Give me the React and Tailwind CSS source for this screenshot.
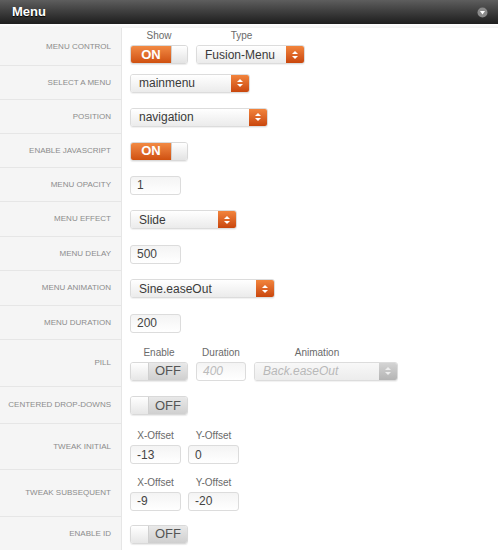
import React from "react";

const font = { fontFamily: '"Liberation Sans", Arial, sans-serif' };

function Toggle({ on }) {
  if (on) {
    return (
      <div className="flex h-[19px] w-[58px] overflow-hidden rounded-[3px] border border-[#d9d9d9] shadow-[0_1px_1px_rgba(0,0,0,0.08)]">
        <div className="flex w-[40px] items-center justify-center bg-gradient-to-b from-[#f28a43] to-[#cf500e] text-[13px] font-bold text-white">
          ON
        </div>
        <div className="flex-1 border-l border-[#d0d0d0] bg-gradient-to-b from-[#ffffff] to-[#e3e3e3]" />
      </div>
    );
  }
  return (
    <div className="flex h-[19px] w-[58px] overflow-hidden rounded-[3px] border border-[#d9d9d9] shadow-[0_1px_1px_rgba(0,0,0,0.08)]">
      <div className="w-[18px] border-r border-[#d0d0d0] bg-gradient-to-b from-[#ffffff] to-[#e6e6e6]" />
      <div className="flex flex-1 items-center justify-center bg-gradient-to-b from-[#e9e9e9] to-[#cfcfcf] text-[13px] text-[#555]">
        OFF
      </div>
    </div>
  );
}

function Arrows({ disabled }) {
  return (
    <div
      className={
        "flex w-[18px] flex-col items-center justify-center gap-[2px] " +
        (disabled
          ? "bg-gradient-to-b from-[#d4d4d4] to-[#b4b4b4]"
          : "bg-gradient-to-b from-[#f2843c] to-[#c9460b]")
      }
    >
      <svg width="6" height="3" viewBox="0 0 6 3">
        <path d="M0 3 L3 0 L6 3 Z" fill={disabled ? "#eeeeee" : "#ffffff"} />
      </svg>
      <svg width="6" height="3" viewBox="0 0 6 3">
        <path d="M0 0 L3 3 L6 0 Z" fill={disabled ? "#eeeeee" : "#ffffff"} />
      </svg>
    </div>
  );
}

function Select({ value, width, disabled }) {
  return (
    <div
      className={
        "flex h-[19px] overflow-hidden rounded-[3px] border border-[#dcdcdc] shadow-[0_1px_1px_rgba(0,0,0,0.06)] " +
        width
      }
    >
      <div
        className={
          "flex flex-1 items-center pl-[8px] text-[12px] " +
          (disabled
            ? "bg-gradient-to-b from-[#f8f8f8] to-[#ececec] italic text-[#b8b8b8]"
            : "bg-gradient-to-b from-[#ffffff] to-[#ebebeb] text-[#3a3a3a]")
        }
      >
        {value}
      </div>
      <Arrows disabled={disabled} />
    </div>
  );
}

function Input({ value, disabled, width = "w-[51px]" }) {
  return (
    <div
      className={
        "flex h-[19px] items-center rounded-[3px] border border-[#dcdcdc] bg-gradient-to-b from-[#f4f4f4] to-[#ffffff] pl-[6px] text-[12px] " +
        width +
        (disabled ? " italic text-[#bbbbbb]" : " text-[#444]")
      }
    >
      {value}
    </div>
  );
}

function Labeled({ label, children, arrow }) {
  return (
    <div className="flex flex-col">
      <div className={"mb-[3px] text-center text-[10px] leading-[12px] text-[#6a6a6a] " + (arrow ? "pr-[18px]" : "")}>
        {label}
      </div>
      {children}
    </div>
  );
}

function Row({ label, height, children }) {
  return (
    <div className={"flex " + height}>
      <div className="flex w-[122px] shrink-0 items-center justify-end border-b border-r border-[#e6e6e6] bg-[#f5f5f5] pr-[10px] text-[8px] font-normal uppercase text-[#8c8c8c]">
        {label}
      </div>
      <div className="flex flex-1 items-center gap-[8px] pl-[8px]">{children}</div>
    </div>
  );
}

export default function App() {
  return (
    <div className="w-[498px] bg-white" style={font}>
      <div className="flex h-[24px] items-center justify-between bg-gradient-to-b from-[#5e5e5e] to-[#1e1e1e] px-[12px]">
        <span className="text-[13px] font-bold text-white [text-shadow:0_1px_1px_#000]">Menu</span>
        <svg width="11" height="11" viewBox="0 0 11 11" className="-mr-[2px]">
          <circle cx="5.5" cy="5.5" r="5" fill="#8a8a8a" />
          <path d="M3 4 L8 4 L5.5 7.5 Z" fill="#ffffff" />
        </svg>
      </div>
      <div className="h-[4px] bg-gradient-to-b from-[#ffffff] to-[#f2f2f2]" />

      <Row label="Menu Control" height="h-[38px]">
        <Labeled label="Show">
          <Toggle on />
        </Labeled>
        <Labeled label="Type" arrow>
          <Select value="Fusion-Menu" width="w-[109px]" />
        </Labeled>
      </Row>
      <Row label="Select a Menu" height="h-[34px]">
        <Select value="mainmenu" width="w-[120px]" />
      </Row>
      <Row label="Position" height="h-[34px]">
        <Select value="navigation" width="w-[138px]" />
      </Row>
      <Row label="Enable Javascript" height="h-[34px]">
        <Toggle on />
      </Row>
      <Row label="Menu Opacity" height="h-[34px]">
        <Input value="1" />
      </Row>
      <Row label="Menu Effect" height="h-[35px]">
        <Select value="Slide" width="w-[107px]" />
      </Row>
      <Row label="Menu Delay" height="h-[34px]">
        <Input value="500" />
      </Row>
      <Row label="Menu Animation" height="h-[35px]">
        <Select value="Sine.easeOut" width="w-[145px]" />
      </Row>
      <Row label="Menu Duration" height="h-[34px]">
        <Input value="200" />
      </Row>
      <Row label="Pill" height="h-[47px]">
        <Labeled label="Enable">
          <Toggle />
        </Labeled>
        <Labeled label="Duration">
          <Input value="400" disabled width="w-[50px]" />
        </Labeled>
        <Labeled label="Animation" arrow>
          <Select value="Back.easeOut" width="w-[144px]" disabled />
        </Labeled>
      </Row>
      <Row label="Centered Drop-Downs" height="h-[37px]">
        <Toggle />
      </Row>
      <Row label="Tweak Initial" height="h-[46px]">
        <div className="flex gap-[7px]">
          <Labeled label="X-Offset">
            <Input value="-13" />
          </Labeled>
          <Labeled label="Y-Offset">
            <Input value="0" />
          </Labeled>
        </div>
      </Row>
      <Row label="Tweak Subsequent" height="h-[47px]">
        <div className="flex gap-[7px]">
          <Labeled label="X-Offset">
            <Input value="-9" />
          </Labeled>
          <Labeled label="Y-Offset">
            <Input value="-20" />
          </Labeled>
        </div>
      </Row>
      <Row label="Enable ID" height="h-[34px]">
        <Toggle />
      </Row>
    </div>
  );
}
